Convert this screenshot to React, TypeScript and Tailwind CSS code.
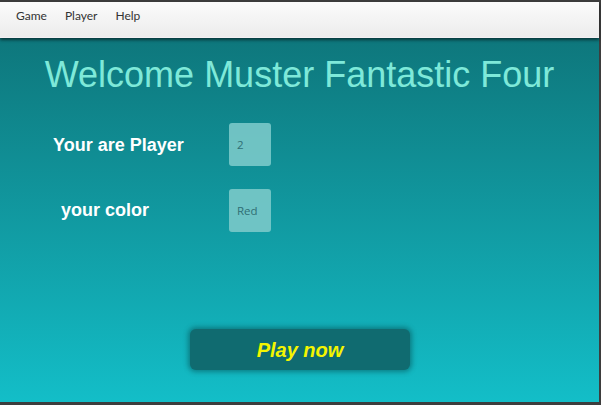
export default function App() {
  return (
    <div className="w-[601px] h-[405px] bg-[#3d3d3d] pt-[2px] pr-[2px] pb-[3px] flex flex-col overflow-hidden" style={{ fontFamily: "Arial, 'Liberation Sans', sans-serif" }}>
      <div className="h-[36px] bg-gradient-to-b from-[#fbfbfb] to-[#ececec] border-b border-[#f4f0f4] flex items-start pt-[5px] relative z-10 shadow-[0_2px_3px_rgba(0,0,0,0.55)] text-[12px] text-[#333]" style={{ fontFamily: "Lato, 'Open Sans', sans-serif" }}>
        <span className="ml-[16px]">Game</span>
        <span className="ml-[18px]">Player</span>
        <span className="ml-[18px]">Help</span>
      </div>
      <div className="flex-1 bg-gradient-to-b from-[#0e777c] to-[#13bec8] flex flex-col">
        <div className="h-[72px] flex items-center justify-center text-[36px] text-[#7ee9d9] pt-[2px]" style={{ fontFamily: "'Liberation Sans', Arial, sans-serif" }}>
          Welcome Muster Fantastic Four
        </div>
        <div className="flex items-center h-[43px] mt-[13px]">
          <div className="w-[229px] pl-[53px] pt-[2px] text-[18px] font-bold text-white">Your are Player</div>
          <div className="w-[42px] h-[43px] rounded-[3px] bg-[#7ac9c9]/90 flex items-center pl-[8px] text-[11.5px] text-[#2f6f74]" style={{ fontFamily: "'Open Sans', sans-serif" }}>2</div>
        </div>
        <div className="flex items-center h-[43px] mt-[23px]">
          <div className="w-[229px] pl-[61px] text-[18px] font-bold text-white">your color</div>
          <div className="w-[42px] h-[43px] rounded-[3px] bg-[#7ac9c9]/90 flex items-center pl-[8px] text-[11.5px] text-[#2f6f74]" style={{ fontFamily: "'Open Sans', sans-serif" }}>Red</div>
        </div>
        <div className="flex justify-center mt-[97px] pl-[1px]">
          <div className="w-[220px] h-[41px] rounded-[6px] bg-[#106b70] shadow-[0_0_5px_2px_rgba(0,60,65,0.45)] flex items-center justify-center text-[20px] font-bold italic text-[#f4f500]">Play now</div>
        </div>
      </div>
    </div>
  );
}
